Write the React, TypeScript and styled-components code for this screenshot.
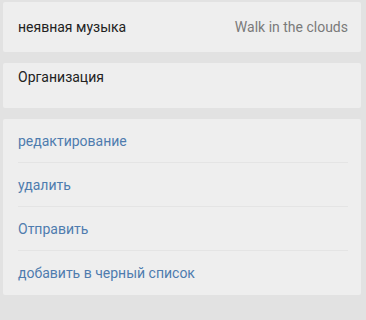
import React from 'react';
import styled, { createGlobalStyle } from 'styled-components';

const GlobalStyle = createGlobalStyle`
  html, body {
    margin: 0;
    padding: 0;
    background: #e2e2e2;
  }
  body {
    font-family: Roboto, "Noto Sans", sans-serif;
  }
`;

const actions = ['редактирование', 'удалить', 'Отправить', 'добавить в черный список'];

const App = () => {
  return (
    <>
      <GlobalStyle />
      <Page>
        <Card>
          <InfoRow>
            <Label>неявная музыка</Label>
            <Value>Walk in the clouds</Value>
          </InfoRow>
        </Card>
        <Card>
          <OrgRow>
            <Label>Организация</Label>
          </OrgRow>
        </Card>
        <Card>
          {actions.map((a, i) => (
            <ActionRow key={a} last={i === actions.length - 1}>
              <ActionText>{a}</ActionText>
            </ActionRow>
          ))}
        </Card>
      </Page>
    </>
  );
};

export default App;

const Page = styled.div`
  display: flex;
  flex-direction: column;
  gap: 11px;
  padding: 2px 5px 0 3px;
  height: 320px;
  box-sizing: border-box;
`;

const Card = styled.div`
  background: #eeeeee;
  border-radius: 2px;
`;

const InfoRow = styled.div`
  display: flex;
  justify-content: space-between;
  align-items: center;
  height: 50px;
  padding: 0 13px 0 15px;
`;

const OrgRow = styled.div`
  height: 45px;
  padding: 6px 15px 0;
  box-sizing: border-box;
`;

const Label = styled.div`
  font-size: 14px;
  color: #222222;
`;

const Value = styled.div`
  font-size: 14px;
  color: #7a7a7a;
`;

const ActionRow = styled.div<{ last?: boolean }>`
  height: 44px;
  margin: 0 13px 0 15px;
  display: flex;
  align-items: center;
  box-sizing: border-box;
  border-bottom: ${p => (p.last ? 'none' : '1px solid #e4e4e4')};
  padding-top: ${p => (p.last ? '0' : '1px')};
`;

const ActionText = styled.div`
  font-size: 14px;
  color: #4e7cae;
`;
